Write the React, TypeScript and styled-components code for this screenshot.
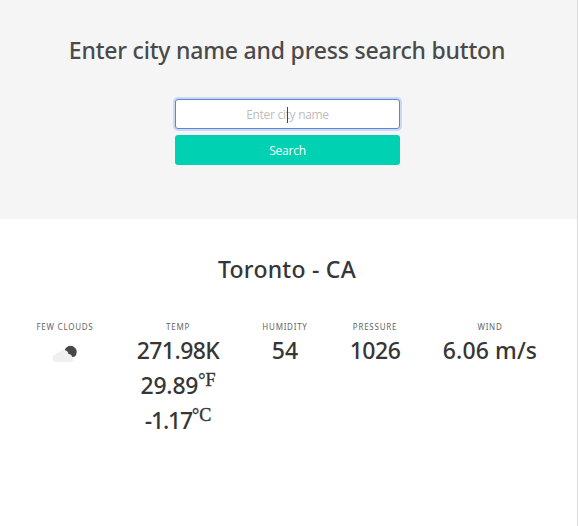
import React from "react";
import styled, { createGlobalStyle } from "styled-components";

const GlobalStyle = createGlobalStyle`
  *, *::before, *::after { box-sizing: border-box; }
  body { margin: 0; background: #fff; }
`;

const Page = styled.div`
  width: 578px;
  height: 526px;
  overflow: hidden;
  background: #fff;
  border-right: 1px solid #dcdcdc;
  font-family: "Open Sans", "Noto Sans", sans-serif;
  color: #363636;
`;

const Hero = styled.section`
  height: 219px;
  background: #f5f5f5;
  display: flex;
  flex-direction: column;
  align-items: center;
  padding: 35px 3px 0 0;
`;

const Title = styled.h1<{ $tone?: string; $spacing: number }>`
  margin: 0;
  font-family: "Noto Sans", "Open Sans", sans-serif;
  font-size: 23px;
  line-height: 30px;
  font-weight: 500;
  white-space: nowrap;
  letter-spacing: ${(p) => p.$spacing}px;
  color: ${(p) => p.$tone ?? "#363636"};
`;

const Form = styled.div`
  width: 225px;
  margin: 34px 0 0 1px;
  display: flex;
  flex-direction: column;
  gap: 6px;
`;

const Field = styled.div`
  height: 30px;
  display: flex;
  align-items: center;
  justify-content: center;
  position: relative;
  border: 1px solid #5586e0;
  border-radius: 3px;
  background: #fff;
  box-shadow: 0 0 0 2px rgba(85, 134, 224, 0.25);
`;

const Placeholder = styled.span`
  font-size: 12px;
  line-height: 18px;
  padding-top: 2px;
  letter-spacing: -0.3px;
  color: #bdbdbd;
  white-space: nowrap;
`;

const Caret = styled.i`
  position: absolute;
  left: 111px;
  top: 7px;
  width: 1px;
  height: 16px;
  background: #444;
`;

const SearchButton = styled.button`
  height: 30px;
  border: 0;
  padding: 2px 0 0;
  border-radius: 3px;
  background: #00d1b2;
  color: #fff;
  font-family: inherit;
  font-size: 12px;
  line-height: 18px;
  letter-spacing: -0.25px;
`;

const Weather = styled.main`
  display: flex;
  flex-direction: column;
  align-items: center;
  padding: 35px 3px 0 0;
`;

const Stats = styled.div`
  display: grid;
  grid-template-columns: 100px 126px 88px 92px 138px;
  width: 544px;
  margin-top: 35px;
`;

const Stat = styled.div`
  display: flex;
  flex-direction: column;
  align-items: center;
`;

const Heading = styled.p`
  margin: 0;
  font-family: "Noto Sans", "Open Sans", sans-serif;
  font-size: 8px;
  line-height: 14px;
  height: 14px;
  padding-top: 1px;
  letter-spacing: 0.75px;
  text-transform: uppercase;
  color: #666;
  white-space: nowrap;
`;

const Value = styled.p<{ $spacing?: number }>`
  margin: 0;
  height: 35px;
  display: flex;
  font-family: "Noto Sans", "Open Sans", sans-serif;
  font-size: 23px;
  line-height: 35px;
  font-weight: 500;
  letter-spacing: ${(p) => p.$spacing ?? 0}px;
  white-space: nowrap;
`;

const Unit = styled.sup`
  font-family: "Liberation Serif", serif;
  font-size: 18px;
  line-height: 24px;
  letter-spacing: 0;
  vertical-align: top;
  -webkit-text-stroke: 0.4px currentColor;
`;

const CloudIcon = styled.svg`
  display: block;
  width: 28px;
  height: 22px;
  margin-top: 9px;
`;

export default function App() {
  return (
    <>
      <GlobalStyle />
      <Page>
        <Hero>
          <Title $tone="#4a4a4a" $spacing={-0.2}>Enter city name and press search button</Title>
          <Form>
            <Field>
              <Placeholder>Enter city name</Placeholder>
              <Caret />
            </Field>
            <SearchButton>Search</SearchButton>
          </Form>
        </Hero>
        <Weather>
          <Title $spacing={0.25}>Toronto - CA</Title>
          <Stats>
            <Stat>
              <Heading>Few clouds</Heading>
              <CloudIcon viewBox="0 0 28 22" aria-label="Few clouds">
                <path d="M13.5 8.5a6.2 6.2 0 1 1 10 6.2L20 15z" fill="#484848" />
                <path
                  d="M5.5 20a3.8 3.8 0 0 1-.5-7.6 2.7 2.7 0 0 1 3.3-2 5 5 0 0 1 9.2 1.6 3.1 3.1 0 0 1 3.5 3 2.6 2.6 0 0 1-.8 5z"
                  fill="#f0f0f0"
                />
              </CloudIcon>
            </Stat>
            <Stat>
              <Heading>Temp</Heading>
              <Value $spacing={-0.55}>271.98K</Value>
              <Value $spacing={-0.2}>29.89<Unit>°F</Unit></Value>
              <Value $spacing={-1.2}>-1.17<Unit>°C</Unit></Value>
            </Stat>
            <Stat>
              <Heading>Humidity</Heading>
              <Value>54</Value>
            </Stat>
            <Stat>
              <Heading>Pressure</Heading>
              <Value $spacing={-0.5}>1026</Value>
            </Stat>
            <Stat>
              <Heading>Wind</Heading>
              <Value $spacing={0.1}>6.06 m/s</Value>
            </Stat>
          </Stats>
        </Weather>
      </Page>
    </>
  );
}
